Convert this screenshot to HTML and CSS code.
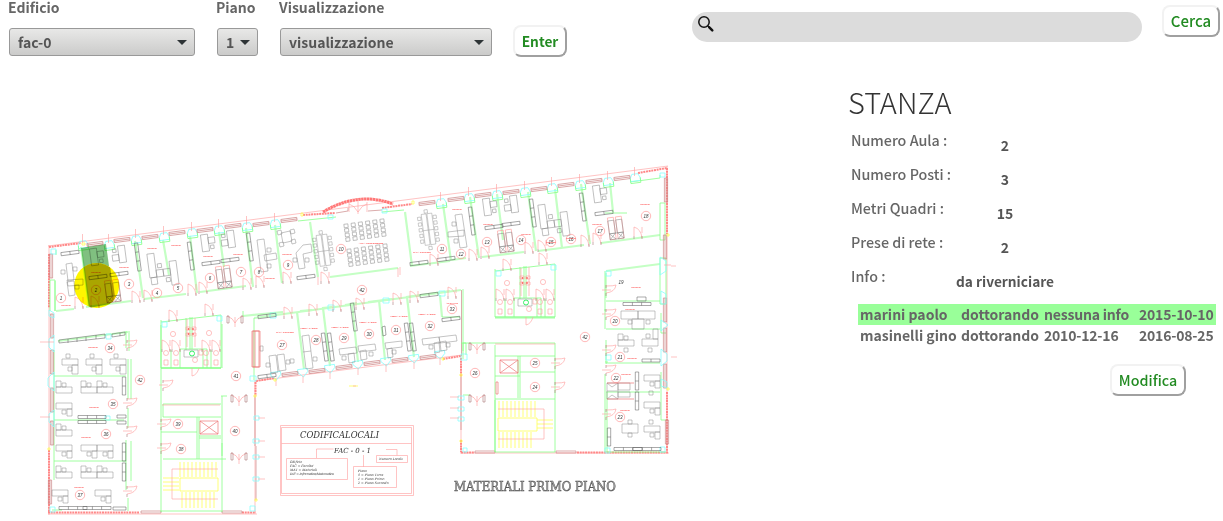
FILE: index.html
```html
<!DOCTYPE html>
<html lang="it">
<head>
<meta charset="utf-8">
<title>Stanze</title>
<link rel="stylesheet" href="styles.css">
</head>
<body>
<header class="bar">
  <div class="field edificio"><span class="label">Edificio</span><div class="select">fac-0<svg width="10" height="5"><path d="M0 0h10l-5 5z"/></svg></div></div>
  <div class="field piano"><span class="label">Piano</span><div class="select">1<svg width="10" height="5"><path d="M0 0h10l-5 5z"/></svg></div></div>
  <div class="field vista"><span class="label">Visualizzazione</span><div class="select">visualizzazione<svg width="10" height="5"><path d="M0 0h10l-5 5z"/></svg></div></div>
  <button class="btn enter">Enter</button>
  <div class="search"><svg width="18" height="18" viewBox="0 0 18 18"><circle cx="7" cy="7" r="5.200" fill="none" stroke="#111" stroke-width="1.500"/><path d="M10.700 10.800l1.600 1.600" stroke="#111" stroke-width="1.400"/><path d="M12.300 12.400l3 3" stroke="#111" stroke-width="2.500" stroke-linecap="round"/></svg></div>
  <button class="btn cerca">Cerca</button>
</header>
<main class="main">
<svg class="plan" width="640" height="361" viewBox="40 160 640 361">
<defs>
  <g id="pil"><path class="c" d="M-3-2h6l2 4v3H-5V2z" transform="rotate(-7.5)"/><path class="g" d="M-5 2v5H5V2" transform="rotate(-7.5)"/><path class="r" d="M-.5-9V0"/></g>
  <g id="pib"><path class="c" d="M-5-4H5v3L0 4-5-1z" transform="rotate(-7.5)"/><path class="r" d="M0 3v7"/></g>
  <g id="win"><path class="w" d="M-8-1.6H8V1.6H-8zM-8 0H8" transform="rotate(-7.5)"/></g>
  <g id="winv"><path class="w" d="M-1.6-12h3.2v24h-3.2zM0-12v24"/></g>
  <g id="dr"><path class="r" d="M-4-8v9M-4-8q7 2 8 11M4-8v6"/><path class="d" d="M-4 1v3M4 1v3"/></g>
  <g id="dd"><path class="r" d="M-8-5q6 2 8 7q2-5 8-7M0-4v10"/><path class="d" d="M-8-5v7h2v-7zM6-5v7h2v-7z"/></g>
  <g id="dh"><path class="r" d="M0-4q8 0 10-1q-1 7-10 8M-4 0h9"/><path class="d" d="M0-5v3M0 3v3"/></g>
  <g id="cab"><path class="k2" d="M-2-14h3.5v28H-2zM-2-5h3.5M-2 4h3.5" transform="rotate(-7.5)"/></g>
  <g id="cah"><path class="k2" d="M-9-1.6H9V1.6H-9zM0-1.6v3.2" transform="rotate(-7.5)"/></g>
  <g id="cbh"><path class="k2" d="M-14-1.5h28v3h-28zM-4.600-1.500v3M4.600-1.500v3"/></g>
  <g id="cbv"><path class="k2" d="M-1.700-9h3.400v18h-3.400zM-1.700 0h3.400"/></g>
  <g id="dv"><path class="k" d="M-3.500-8.500h7v17h-7zM-10 0h6.500v6H-10zM-9-6h3.500v3.500H-9z" transform="rotate(-7.5)"/></g>
  <g id="dw"><path class="k" d="M-3.500-8.500h7v17h-7zM3.500-5H10v6H3.500zM5 3h3.500v3.500H5z" transform="rotate(-7.5)"/></g>
  <g id="dp"><path class="k" d="M-8-17h7V7h-7zM-1 0h7v7h-7zM6 0h7v7h-7zM13-7h7v24h-7zM1-6h4v4H1zM8 9h4v4H8zM-7 7h6v7h-6z" transform="rotate(-7.5)"/></g>
  <g id="de"><path class="k" d="M-8-4H8v6H-8zM2 2h6v9H2zM-4-9h4v4h-4zM-2 4h4v4h-4z"/></g>
  <g id="df"><path class="k" d="M-8-3H8v6H-8zM-8-9h5v6h-5zM-2-7h4v4h-4z"/></g>
  <g id="dg"><path class="k" d="M-8-3H8v6H-8zM3 3h5v7H3zM-2 4h4v4h-4z"/></g>
  <g id="tb"><path class="k" d="M-7-20h6v38h-6zM0-20h6v38H0zM-7 0H6M-12-17h4v4h-4zm0 7h4v4h-4zm0 7h4v4h-4zm0 7h4v4h-4zm0 7h4v4h-4zM7-17h4v4H7zm0 7h4v4H7zm0 7h4v4H7zm0 7h4v4H7zm0 7h4v4H7zM-3-25h4v4h-4zm0 45h4v4h-4z" transform="rotate(-7.5) scale(.82)"/></g>
  <g id="col"><path class="k" d="M-2-9h4v3.500h-4zm0 4.600h4V-1h-4zm0 4.600h4v3.500h-4zm0 4.600h4v3.500h-4z" transform="rotate(-7.5)"/></g>
  <g id="aud"><use href="#col"/><use href="#col" x="7.200" y="-1"/><use href="#col" x="14.400" y="-2"/><use href="#col" x="21.600" y="-3"/><use href="#col" x="28.800" y="-4"/><use href="#col" x="36" y="-5"/></g>
  <g id="shaft"><g transform="rotate(-7.5)"><path class="r" d="M-7-13h6v22h-6zM1-13h6v22H1z"/><path class="k" d="M-7-10h6v13h-6zM1-10h6v13H1zM-7 9l6-6M-7 3l6 6M1 9l6-6M1 3l6 6M-7 9H7V3H-7z"/></g></g>
  <g id="wc">
    <path class="g" d="M-30-11L30-18V35H-30V-13M-30 35H30M-1-16v32M-5-15v32M1-16v32M-11 16H12V35M-11 16V35M-20 17v18M20 17v18M12 16h4v19"/>
    <path class="c" d="M-29-11h5v5h-5zM26-17h5v5h-5z"/>
    <path class="r" d="M-4-14v28M4-15v29M-5-6h4v3h-4zM1-6h4v3H1zM-5 0h4v3h-4zM1 0h4v3H1zM-27 27h4v5h-4zM-17 27h4v5h-4zM13 27h4v5h-4zM23 27h4v5h-4zM8 17h4v5H8z"/>
    <circle class="r" cx="-18" cy="1" r="2.600"/><circle class="r" cx="18" cy="0" r="2.600"/><circle class="r" cx="-25" cy="20" r="2.500"/><circle class="r" cx="-15" cy="20" r="2.500"/><circle class="r" cx="15" cy="20" r="2.500"/><circle class="r" cx="25" cy="20" r="2.500"/><circle class="r" cx="4" cy="27" r="2.500"/>
    <circle class="rf" cx="-2.500" cy="-4" r=".9"/><circle class="rf" cx="2" cy="-4" r=".9"/><circle class="rf" cx="-2.500" cy="1" r=".9"/><circle class="rf" cx="2" cy="1" r=".9"/>
    <path class="k" d="M-7 17H7v7H-7z"/><circle class="gs" cx="1" cy="20.500" r="2.500"/>
    <use href="#dr" x="-18" y="-15"/><use href="#dr" x="18" y="-21"/><use href="#dr" x="-25" y="15"/><use href="#dr" x="-15" y="15"/><use href="#dr" x="15" y="15"/><use href="#dr" x="25" y="15"/><path class="r" d="M1 35v8q5-1 7-8"/>
  </g>
</defs>

<!-- outer walls -->
<path class="r" d="M48 246L668 166M667 166v287M49 245v270M48 514h209M255 380v132M255 381l207-26M461 356v97M460 453h209"/>
<path class="brick" d="M49 247l32-4M49 254v54M49 450v63M48 512.500h91M242 512.500h14M256 381l19-3M255.500 382v14M443 359l18-3M461 358v18M461 440v12M461 452.500h13M577 452.500h91M667 392v60M667 168v66M638 173l29-5M303 215l32-2M382 208l30-4"/>
<path class="arc" d="M323 212q35-21 70-8"/>
<path class="w" d="M336 213l12-2v-3M382 210l-14 1M141 511h20v2h-20zM222 511h20v2h-20zM475 451h20v2h-20zM556 451h20v2h-20zM255 396v50M461 376v54M461.500 290v66M256 446v54"/>

<!-- partitions -->
<g class="gt">
<path d="M56 311l18-2M86 307l45-6M144 299l42-5M200 292l46-6M330 277l68-9M410 266l40-5M452 260l14-2M482 257l42-5M538 251l46-6M601 243l59-8M243 316l40-4M300 311l12-1M322 308l10-1M345 305l12-2M368 302l24-3M406 297l44-6"/>
<path d="M81 247l8 59M135 241l8 57M163 240l6 35M190 236l7 57M219 232l5 35M246 228l7 59M275 225l7 58M310 222l8 55M405 212l7 54M443 204l8 57M470 197l9 61M497 194l6 46M528 192l8 59M555 189l7 59M581 184l9 60M610 183l3 29"/>
<path d="M297 312l7 57M323 308l7 58M352 304l6 58M379 300l6 60M407 297l7 60M440 295l2 22"/>
<path d="M58 341l70-9M606 271l54-7M254 318l207-28"/>
</g>
<path class="g" d="M50 280h5v31M55 281v30M50 280v31M54 350v130M52 510h10M54 376h72M54 420h70M54 461h72M126 331v17M129 331v20M128 359v40M131 359v40M128 408v20M126 440v50M131 441v40M128 498v13M161 325v187M222 324v44M161 368h60M163 404h58M163 417h58M163 404v13M161 432h36M197 417v42M199 417v42M163 459h63M222 396v60M222 443v69M199 436h22M199 438h22M243 316v-5M254 318v62M161 511h61M221 396h6"/>
<path class="g" d="M463 289v70M461 343h5v12M495 318h60M463 343h92M495 345v107M555 343v109M495 356h60M518 356v42M520 356v42M520 372h35M495 376h25M495 399h60M495 400v52M495 452h60M463 343v8M463 395h7M605 271v40M606 273v25M660 203v37h5v-37zM660 258v46h6v-46zM606 301h54M606 329h54M606 363h54M606 392h54M605 309v20M606 340v24M605 374v78M607 392v60M661 313v20h5M661 372v48h5M605 362h3M606 452h60M442 317h18M605 213h22M630 182l30-4v-3M56 255v-5M298 221l38-4M382 212l22-2"/>

<!-- facade -->
<g>
<use href="#pil" x="83" y="243"/><use href="#pil" x="109" y="243"/><use href="#pil" x="136" y="238"/><use href="#pil" x="164" y="235"/><use href="#pil" x="192" y="231"/><use href="#pil" x="219" y="228"/><use href="#pil" x="247" y="225"/><use href="#pil" x="275" y="222"/><use href="#pil" x="441" y="201"/><use href="#pil" x="469" y="196"/><use href="#pil" x="497" y="193"/><use href="#pil" x="525" y="190"/><use href="#pil" x="552" y="186"/><use href="#pil" x="580" y="183"/><use href="#pil" x="608" y="180"/><use href="#pil" x="635" y="176"/>
<use href="#win" x="95" y="244"/><use href="#win" x="122" y="240"/><use href="#win" x="150" y="237"/><use href="#win" x="177" y="233"/><use href="#win" x="205" y="230"/><use href="#win" x="233" y="226"/><use href="#win" x="261" y="224"/><use href="#win" x="289" y="220"/><use href="#win" x="427" y="203"/><use href="#win" x="456" y="199"/><use href="#win" x="483" y="195"/><use href="#win" x="511" y="192"/><use href="#win" x="539" y="189"/><use href="#win" x="566" y="185"/><use href="#win" x="594" y="181"/><use href="#win" x="622" y="178"/>
<use href="#pib" x="276" y="376"/><use href="#pib" x="303" y="373"/><use href="#pib" x="330" y="369"/><use href="#pib" x="358" y="365"/><use href="#pib" x="386" y="362"/><use href="#pib" x="414" y="359"/><use href="#pib" x="440" y="355"/>
<use href="#win" x="290" y="374"/><use href="#win" x="317" y="371"/><use href="#win" x="344" y="367"/><use href="#win" x="372" y="363"/><use href="#win" x="400" y="360"/><use href="#win" x="428" y="357"/>
<use href="#winv" x="51" y="266"/><use href="#winv" x="52" y="326"/><use href="#winv" x="52" y="362"/><use href="#winv" x="52" y="400"/><use href="#winv" x="52" y="433"/><use href="#winv" x="50" y="492"/><use href="#winv" x="666" y="190"/><use href="#winv" x="665" y="247"/><use href="#winv" x="665" y="310"/><use href="#winv" x="665" y="340"/><use href="#winv" x="665" y="376"/><use href="#winv" x="667" y="432"/>
</g>
<path class="c" d="M49 310l5 3v5l-5-2zM54 335l-5 4v8l5 5zM54 372l-6 6v8l6 5zM54 410l-5 4v8l5 5zM50 507h5v5h-5zM660 257l6 4v10l-6 4zM661 291l5 3v10h-5zM661 320l7 5-7 6zM661 349l6 5v7l-6 5zM661 379l6 3v6l-6-2zM660 447h5v5h-5zM463 448h4v4h-4zM605 448h5v5h-5zM606 355h5v5h-5zM606 271h5v5h-5zM461 354h6v6h-6zM250 376h6v5h-6zM270 313h6v5h-6zM328 305h6v5h-6zM383 298h6v5h-6zM439 291h6v5h-6zM254 416h5v4h-5zM253 439h6v4h-6zM253 455h6v4h-6zM253 477h6v4h-6zM458 396h6v4h-6zM458 407h6v4h-6zM458 417h6v4h-6zM328 215h5v4h-5zM382 209h5v4h-5zM51 249h5v5h-5zM660 173h5v4h-5zM250 506h5v5h-5zM106 334h5v5h-5zM105 416h5v4h-5z"/>
<path class="r" d="M40 342h14M40 417h10M671 266h5M671 357h6M258 418h7M258 441h7M258 457h7M258 479h7M450 397h9M450 408h9M450 418h9M664 265h7"/>
<path class="y" d="M82 243h3v2h-3zM301 213h2v3h-2zM412 201h2v3h-2zM48 448h2v2h-2zM254 395h2v2h-2zM255 499h2v2h-2zM460 374h2v2h-2zM460 440h2v2h-2zM667 234h2v2h-2zM274 379h2v2h-2zM442 358h2v2h-2zM667 388h2v2h-2z"/>
<path class="r" d="M349 202v10M367 202v10M349 204q5 1 9 8q4-7 9-8M358 199v15"/>

<!-- upper row furniture -->
<g>
<use href="#cah" x="70" y="253"/><path class="k" d="M66 264l6-1 2 17-6 1zM67 282l7-1 1 14-6 1zM61 270h4v4h-4zM73 267h4v4h-4zM75 285h4v4h-4zM67 280l16-1v6l-15 1z"/>
<use href="#dw" x="94" y="257"/><use href="#dv" x="122" y="254"/><use href="#cah" x="98" y="277"/><use href="#cah" x="119" y="274"/><use href="#shaft" x="113" y="293"/>
<use href="#cab" x="138" y="257"/><use href="#dp" x="157" y="270"/><use href="#cab" x="191" y="256"/>
<use href="#dw" x="205" y="243"/><use href="#dv" x="231" y="239"/><use href="#cah" x="211" y="263"/><use href="#cah" x="230" y="260"/><use href="#shaft" x="224" y="279"/>
<use href="#cab" x="250" y="247"/><path class="k" d="M257 240l7-1 4 32-7 1zM264 255l12-2 1 6-12 2zM267 248h4v4h-4zM267 264h4v4h-4z"/>
<path class="k" d="M281 233l9-2 2 10-9 2zM277 231l4-1 1 4-4 1zM290 230l4-1 1 4-4 1zM279 243l4-1 1 4-4 1zM291 240l4-1 1 4-4 1zM296 253l7-8 8-1 1 8-9 2 2 14-6 1zM293 258h4v4h-4zM305 258h4v4h-4z"/>
<use href="#cah" x="306" y="277"/><use href="#tb" x="324" y="251"/><use href="#aud" x="347" y="233"/><use href="#aud" x="350" y="258"/><use href="#tb" x="429" y="230"/>
<use href="#cah" x="419" y="263"/><use href="#cah" x="446" y="259"/>
<path class="k" d="M455 215l7-1 5 33-7 1zM448 232l16-2v6l-16 1zM452 222h4v4h-4zM454 239h4v4h-4z"/>
<use href="#cab" x="472" y="221"/><use href="#dw" x="487" y="207"/><use href="#dv" x="514" y="204"/><use href="#cah" x="494" y="227"/><use href="#cah" x="511" y="224"/><use href="#shaft" x="506" y="243"/>
<use href="#cab" x="533" y="213"/><use href="#dp" x="548" y="221"/><use href="#cab" x="583" y="207"/><use href="#dw" x="597" y="194"/><use href="#cah" x="604" y="213"/><use href="#shaft" x="616" y="230"/>
</g>
<!-- middle rooms -->
<use href="#cah" x="267" y="316"/><use href="#cah" x="267" y="376"/><path class="p" d="M252 331h7v36h-7zM255 331v36"/>
<path class="k" d="M260 346h3v5h-3zM269 356l7-1 2 17-7 1zM277 355l7-1 2 16-7 1zM266 363h4v4h-4zM286 360h4v4h-4zM290 359h4v4h-4zM302 336l7-1 4 33-7 1zM303 352l8-1M313 357h4v4h-4zM339 349l17-2 1 6-17 2zM348 354l6-1 1 9-6 1zM342 356h4v4h-4zM358 346l17-2 1 6-17 2zM360 351l6-1 1 9-6 1zM369 352h4v4h-4zM385 343l17-2v6l-16 2zM387 349l5-1 1 9-5 1zM392 350h4v4h-4zM422 339l17-2 1 6-17 2zM439 337l17-2 1 6-17 2zM434 343l5-1 1 10-5 1zM440 342l6-1 1 9-6 1zM429 345h4v4h-4zM446 343h4v4h-4z"/>
<use href="#cab" x="325" y="347"/><use href="#cab" x="331" y="347"/><use href="#cab" x="354" y="317"/><use href="#cab" x="408" y="337"/><use href="#cab" x="413" y="337"/><path class="k2" d="M382 327l3-1 1 9-3 1z"/><use href="#cah" x="429" y="295"/><use href="#cah" x="451" y="319"/>

<!-- left wing furniture -->
<path class="k2" d="M59 340l46-6v4l-46 5zM68 339v4M77 338v4M86 337v4M96 335v4M112 334l13-2v3l-13 2zM120 333v3"/>
<use href="#de" x="70" y="363"/><use href="#de" x="94" y="363"/><use href="#de" x="118" y="363"/>
<use href="#df" x="64" y="390"/><use href="#df" x="89" y="390"/><use href="#df" x="105" y="390"/><use href="#dg" x="64" y="406"/><use href="#df" x="64" y="433"/><use href="#dg" x="64" y="448"/><use href="#dg" x="89" y="448"/><use href="#dg" x="105" y="448"/><use href="#df" x="64" y="475"/><use href="#df" x="89" y="475"/><use href="#df" x="105" y="475"/><use href="#dg" x="60" y="493"/><use href="#dg" x="103" y="493"/>
<use href="#cbh" x="92" y="417"/><use href="#cbh" x="92" y="422"/><path class="k2" d="M117 415h9v3h-9zM117 421h9v3h-9zM113 507h13v3h-13z"/><use href="#cbh" x="73" y="508"/><use href="#cbh" x="97" y="508"/><use href="#cbv" x="124" y="386"/><use href="#cbv" x="124" y="452"/><use href="#cbv" x="124" y="472"/>
<!-- right wing furniture -->
<path class="k" d="M621 311h17v8h-17zM638 311h17v8h-17zM632 319h12v10h-12zM628 320h4v4h-4zM646 320h4v4h-4z"/><path class="k2" d="M637 297h9v4h-9zM642 359h18v3h-18zM651 359v3"/>
<use href="#cbh" x="637" y="304"/><use href="#df" x="626" y="343"/><path class="k" d="M642 339h16v7h-16zM653 329h5v10h-5zM646 334h4v4h-4zM624 348h4v4h-4zM648 348h4v4h-4z"/>
<use href="#dg" x="652" y="378"/><use href="#dg" x="652" y="405"/><use href="#dg" x="652" y="429"/><path class="k" d="M622 424h16v9h-16zM628 420h4v4h-4zM628 433h4v4h-4zM649 420h4v4h-4zM649 391h4v4h-4z"/>
<use href="#cbv" x="637" y="381"/><use href="#cbv" x="637" y="401"/><use href="#cbv" x="609" y="437"/><use href="#cbh" x="628" y="449"/><use href="#cbh" x="647" y="449"/>
<path class="k" d="M607 383h11v16h-11zM607 391h11M607 383l5 4 6-4M607 399l5-4 6 4M618 383h12v7h-12zM618 392h12v5h-12z"/><path class="p" d="M607 383h27M607 399h27"/>

<!-- washrooms, stairs, lifts -->
<use href="#wc" x="191" y="333"/><use href="#wc" x="525" y="282"/>
<path class="r" d="M162 405h58M495 344h60"/>
<path class="p" d="M200 421h18v13h-18zl18 13M218 421l-18 13M500 360h18v13h-18zl18 13M518 360l-18 13M496 382h2v12h-2zM253 331v36h7v-36z"/>
<path class="y" d="M180 478h38v13h-38zM180 462v15M184 462v15M188 462v15M192 462v15M196 462v15M200 462v15M204 462v15M208 462v15M212 462v15M216 462v15M182 492v16M186 492v16M190 492v16M194 492v16M198 492v16M202 492v16M206 492v16M210 492v16M214 492v16M163 478h16M163 482h16M163 486h16M163 490h16"/>
<path class="y" d="M498 418h39v13h-39zM499 401v16M503 401v16M507 401v16M511 401v16M515 401v16M519 401v16M523 401v16M527 401v16M531 401v16M535 401v16M499 432v16M503 432v16M507 432v16M511 432v16M515 432v16M519 432v16M523 432v16M527 432v16M531 432v16M537 420h16M537 424h16M537 428h16"/>
<path class="r" d="M218 469h-46v30h46M498 409h46v30h-46"/>

<!-- doors -->
<use href="#dr" x="79" y="305"/><use href="#dr" x="95" y="304"/><use href="#dr" x="136" y="299"/><use href="#dr" x="148" y="298"/><use href="#dr" x="192" y="292"/><use href="#dr" x="203" y="290"/><use href="#dr" x="247" y="286"/><use href="#dr" x="260" y="284"/><use href="#dr" x="287" y="280"/><use href="#dr" x="325" y="280"/><use href="#dr" x="434" y="262"/><use href="#dr" x="473" y="257"/><use href="#dr" x="485" y="255"/><use href="#dr" x="529" y="250"/><use href="#dr" x="542" y="248"/><use href="#dr" x="585" y="243"/><use href="#dr" x="597" y="241"/><use href="#dr" x="638" y="235"/>
<use href="#dr" x="288" y="315"/><use href="#dr" x="313" y="312"/><use href="#dr" x="337" y="308"/><use href="#dr" x="360" y="306"/><use href="#dr" x="397" y="301"/><use href="#dr" x="414" y="299"/><use href="#dr" x="452" y="295"/>
<use href="#dh" x="127" y="345"/><use href="#dh" x="127" y="403"/><use href="#dh" x="127" y="431"/><use href="#dh" x="127" y="491"/><use href="#dh" x="606" y="290"/><use href="#dh" x="606" y="314"/><use href="#dh" x="606" y="350"/><use href="#dh" x="606" y="370"/><use href="#dh" x="606" y="414"/><use href="#dh" x="163" y="385"/><use href="#dh" x="161" y="424"/><use href="#dh" x="161" y="448"/><use href="#dh" x="555" y="363"/><use href="#dh" x="555" y="387"/>
<use href="#dd" x="235" y="321"/><use href="#dd" x="239" y="400"/><use href="#dd" x="239" y="458"/><use href="#dd" x="477" y="348"/><use href="#dd" x="477" y="400"/>
<path class="r" d="M398 268v9M318 277v8M400 267v8"/>

<!-- room codes -->
<g class="num">
<circle cx="61" cy="298" r="4.700"/><circle cx="96" cy="290" r="4.700"/><circle cx="129" cy="284" r="4.700"/><circle cx="157" cy="293" r="4.700"/><circle cx="178" cy="288" r="4.700"/><circle cx="210" cy="278" r="4.700"/><circle cx="241" cy="272" r="4.700"/><circle cx="259" cy="272" r="4.700"/><circle cx="288" cy="265" r="4.700"/><circle cx="341" cy="249" r="4.700"/><circle cx="442" cy="249" r="4.700"/><circle cx="461" cy="254" r="4.700"/><circle cx="487" cy="242" r="4.700"/><circle cx="521" cy="240" r="4.700"/><circle cx="551" cy="242" r="4.700"/><circle cx="571" cy="239" r="4.700"/><circle cx="600" cy="231" r="4.700"/><circle cx="646" cy="216" r="4.700"/><circle cx="362" cy="290" r="4.700"/><circle cx="282" cy="345" r="4.700"/><circle cx="316" cy="340" r="4.700"/><circle cx="344" cy="338" r="4.700"/><circle cx="369" cy="334" r="4.700"/><circle cx="396" cy="330" r="4.700"/><circle cx="430" cy="326" r="4.700"/><circle cx="452" cy="309" r="4.700"/><circle cx="110" cy="348" r="4.700"/><circle cx="140" cy="380" r="4.700"/><circle cx="113" cy="404" r="4.700"/><circle cx="106" cy="434" r="4.700"/><circle cx="80" cy="495" r="4.700"/><circle cx="178" cy="424" r="4.700"/><circle cx="181" cy="449" r="4.700"/><circle cx="235" cy="431" r="4.700"/><circle cx="236" cy="376" r="4.700"/><circle cx="475" cy="373" r="4.700"/><circle cx="535" cy="363" r="4.700"/><circle cx="535" cy="387" r="4.700"/><circle cx="585" cy="337" r="4.700"/><circle cx="615" cy="321" r="4.700"/><circle cx="620" cy="357" r="4.700"/><circle cx="616" cy="378" r="4.700"/><circle cx="620" cy="417" r="4.700"/>
<text x="61" y="299.500">1</text><text x="96" y="291.500">2</text><text x="129" y="285.500">3</text><text x="157" y="294.500">4</text><text x="178" y="289.500">5</text><text x="210" y="279.500">6</text><text x="241" y="273.500">7</text><text x="259" y="273.500">8</text><text x="288" y="266.500">9</text><text x="341" y="250.500">10</text><text x="442" y="250.500">11</text><text x="461" y="255.500">12</text><text x="487" y="243.500">13</text><text x="521" y="241.500">14</text><text x="551" y="243.500">15</text><text x="571" y="240.500">16</text><text x="600" y="232.500">17</text><text x="646" y="217.500">18</text><text x="621" y="284">19</text><text x="362" y="291.500">42</text><text x="282" y="346.500">27</text><text x="316" y="341.500">28</text><text x="344" y="339.500">29</text><text x="369" y="335.500">30</text><text x="396" y="331.500">31</text><text x="430" y="327.500">32</text><text x="452" y="310.500">33</text><text x="110" y="349.500">34</text><text x="140" y="381.500">42</text><text x="113" y="405.500">35</text><text x="106" y="435.500">36</text><text x="80" y="496.500">37</text><text x="178" y="425.500">39</text><text x="181" y="450.500">38</text><text x="235" y="432.500">40</text><text x="236" y="377.500">41</text><text x="475" y="374.500">26</text><text x="535" y="364.500">25</text><text x="535" y="388.500">24</text><text x="585" y="338.500">42</text><text x="615" y="322.500">20</text><text x="620" y="358.500">21</text><text x="616" y="379.500">22</text><text x="620" y="418.500">23</text>
</g>
<g class="tag">
<text x="66" y="306">STUDIO</text><text x="96" y="273">STUDIO</text><text x="124" y="268">STUDIO</text><text x="152" y="249">STUDIO</text><text x="176" y="246">STUDIO</text><text x="208" y="257">STUDIO</text><text x="238" y="255">STUDIO</text><text x="270" y="279">STUDIO</text><text x="287" y="255">STUDIO</text><text x="371" y="244">AULA CONFERENZE</text><text x="422" y="253">SALA RIUNIONI</text><text x="457" y="210">STUDIO</text><text x="488" y="225">STUDIO</text><text x="526" y="235">STUDIO</text><text x="551" y="243">STUDIO</text><text x="571" y="239">STUDIO</text><text x="597" y="225">STUDIO</text><text x="645" y="205">STUDIO</text><text x="636" y="288">STUDIO</text><text x="630" y="310">STUDIO</text><text x="632" y="359">STUDIO</text><text x="626" y="375">STUDIO</text><text x="625" y="411">STUDIO</text><text x="285" y="333">SALA RIUNIONI</text><text x="309" y="329">MEDIA LABOR</text><text x="340" y="328">MEDIA LABOR</text><text x="368" y="323">MEDIA LABOR</text><text x="399" y="317">MEDIA LABOR</text><text x="427" y="315">MEDIA LABOR</text><text x="452" y="304">ARCHIVIO</text><text x="93" y="348">STUDIO</text><text x="94" y="408">STUDIO</text><text x="86" y="438">STUDIO</text><text x="79" y="488">STUDIO</text>
</g>
<path d="M349 386h9" class="y"/><path d="M353 386h3" class="r"/>

<!-- selected room -->
<clipPath id="spot"><circle cx="96.700" cy="285.500" r="22.500"/></clipPath>
<g class="hl"><path d="M81 248l25-4 3 22-25 4z"/><circle cx="96.700" cy="285.500" r="22.500"/><path clip-path="url(#spot)" d="M83 262l26-4 6 45-26 5z"/></g>

<!-- legend -->
<path class="l" d="M280.500 425.500h133v70h-133zM281.500 427.500h130v66h-130zM281.500 443.500h130M316.500 458v-9h17M386 449.500h11v6M363.500 455v12M286.500 458.500h61v21h-61zM353.500 466.500h43v21h-43zM376.500 455.500h31v7h-31z"/>
<g class="leg"><text class="l1" x="300" y="438" textLength="79" lengthAdjust="spacingAndGlyphs">CODIFICALOCALI</text><text class="l2" x="334" y="453" textLength="37" xml:space="preserve">FAC - 0 - 1</text>
<text x="290" y="463">Edificio</text><text x="290" y="467">FAC = Facolta'</text><text x="290" y="471">MAT = Materiali</text><text x="290" y="475" textLength="44">INF = Informatica/Matematica</text><text x="379" y="460" textLength="24">Numero Locale</text><text x="358" y="472">Piano</text><text x="358" y="476">0 = Piano Terra</text><text x="358" y="480">1 = Piano Primo</text><text x="358" y="484">2 = Piano Secondo</text></g>
<text class="title" x="454" y="491" textLength="162" lengthAdjust="spacingAndGlyphs">MATERIALI PRIMO PIANO</text>
</svg>

<section class="room">
  <h1>STANZA</h1>
  <dl class="info">
    <dt>Numero Aula :</dt><dd>2</dd>
    <dt>Numero Posti :</dt><dd>3</dd>
    <dt>Metri Quadri :</dt><dd>15</dd>
    <dt>Prese di rete :</dt><dd>2</dd>
    <dt>Info :</dt><dd>da riverniciare</dd>
  </dl>
  <div class="people">
    <div class="row on"><span>marini paolo</span><span>dottorando</span><span class="wide">nessuna info</span><span>2015-10-10</span></div>
    <div class="row"><span>masinelli gino</span><span>dottorando</span><span>2010-12-16</span><span>2016-08-25</span></div>
  </div>
  <button class="btn modifica">Modifica</button>
</section>
</main>
</body>
</html>
```
FILE: styles.css
```css
* { box-sizing: border-box; }
body { margin: 0; background: #fff; color: #666; font: 500 14.3px/22px "Noto Sans CJK SC", "Noto Sans", sans-serif; }
.bar { display: flex; align-items: flex-start; height: 72px; padding-left: 8px; }
.field { display: flex; flex-direction: column; gap: 13px; font-size: 14px; font-weight: 700; }
.label { line-height: 15px; white-space: nowrap; }
.select { display: flex; align-items: center; justify-content: space-between; height: 28px; margin-left: 1px; padding: 0 7px 1px 8px; border: 1px solid #999; border-radius: 3px; background: linear-gradient(#e8e8e7, #cbcbca); color: #555; }
.select svg { fill: #2e3436; margin-top: 1px; }
.edificio { width: 187px; }
.piano { width: 42px; margin-left: 21px; }
.vista { width: 213px; margin-left: 21px; }
.btn { height: 32px; padding: 0; border: 2px solid; border-color: #f2f2f2 #a0a0a0 #a0a0a0 #f2f2f2; border-radius: 8px; background: #fff; color: #228b22; font: 500 14.3px/20px "Noto Sans CJK SC", sans-serif; }
.enter { width: 54px; margin: 25px 0 0 21px; font-size: 13.7px; font-weight: 700; }
.search { width: 450px; height: 30px; margin: 12px 0 0 125px; padding: 3px 5px; border-radius: 15px; background: #dcdcdc; }
.search svg { display: block; }
.cerca { width: 58px; margin: 5px 0 0 20px; font-size: 15px; }
.main { display: flex; align-items: flex-start; height: 449px; overflow: hidden; }
.plan { flex: none; margin: 88px 0 0 40px; }
.room { width: 375px; margin-left: 168px; }
h1 { margin: 8px 0 0; font-size: 29px; line-height: 42px; font-weight: 300; color: #333; }
.info { display: grid; grid-template-columns: 103px 102px; grid-auto-rows: 34px; margin: 7px 0 0 3px; }
.info dt { white-space: nowrap; }
.info dd { margin: 5px 0 0; text-align: center; color: #555; font-size: 14px; white-space: nowrap; font-weight: 700; }
.info dd:last-child { font-size: 13.7px; }
.people { width: 358px; margin: 5px 0 0 10px; font-size: 14px; font-weight: 700; }
.row { display: grid; grid-template-columns: 101px 83px 95px 1fr; height: 21px; line-height: 21px; padding-left: 2px; white-space: nowrap; }
.row span:nth-child(n+3) { letter-spacing: -.2px; }
.row .wide { letter-spacing: .25px; }
.on { background: #99ff99; }
.modifica { display: block; width: 76px; margin: 18px 0 0 262px; }

.plan path, .plan circle { fill: none; stroke-width: .6; }
.plan .k { stroke: #888; stroke-width: .5; }
.plan .k2 { stroke: #555; stroke-width: .5; }
.plan .g { stroke: #8f8; stroke-width: .8; }
.plan .gs { stroke: #2e5; stroke-width: .9; }
.plan .gt path { stroke: #c4ffc4; stroke-width: 2.2; }
.plan .r { stroke: #ff9a9a; }
.plan .p { stroke: #e77; stroke-width: .7; }
.plan .rf { fill: #f66; stroke: none; }
.plan .c { stroke: #8ff; stroke-width: .8; }
.plan .y { stroke: #ff5; stroke-width: .8; }
.plan .d { stroke: #a77; }
.plan .w { stroke: #c88; stroke-width: .7; }
.plan .brick { stroke: #f88; stroke-width: 2; stroke-dasharray: 2 .7; }
.plan .arc { stroke: #f77; stroke-width: 3; stroke-dasharray: 2.5 .4; }
.plan .l { stroke: #faa; stroke-width: .7; }
.num circle { stroke: #f88; stroke-width: .6; }
.num text { font: italic 4.5px "Liberation Sans", sans-serif; text-anchor: middle; fill: #333; }
.tag text { font: 2.5px "Liberation Sans", sans-serif; text-anchor: middle; fill: #f22; }
.plan .hl { mix-blend-mode: multiply; }
.plan .hl path, .plan .hl circle { stroke: none; }
.plan .hl path:first-child { fill: #80c080; }
.plan .hl circle { fill: #fff500; }
.plan .hl path:last-child { fill: #aaa500; }
.leg text { font: italic 3.2px "DejaVu Serif", serif; fill: #333; }
.leg .l1 { font-size: 9.5px; }
.leg .l2 { font-size: 7px; }
.title { font: 12px "DejaVu Serif", serif; fill: #aaa; stroke: #555; stroke-width: .5; }
```
